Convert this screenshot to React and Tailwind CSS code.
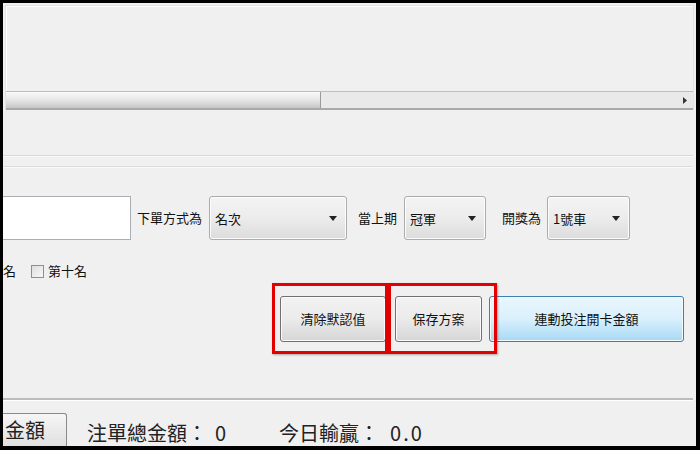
const cjk = { fontFamily: '"Noto Sans CJK TC", "Noto Sans CJK SC", sans-serif' };

const Select = ({ label, width }) => {
  return (
    <div
      className={`h-[44px] ${width} flex items-center justify-between pl-[5px] pr-[9px] border border-[#acacac] rounded-[3px] bg-gradient-to-b from-[#f4f4f4] via-[#ececec] to-[#dcdcdc] shadow-[inset_0_0_0_1px_#fcfcfc]`}
    >
      <span className="text-[13px] text-[#111] leading-none">{label}</span>
      <svg width="8" height="5" viewBox="0 0 8 5">
        <path d="M0 0h8L4 5z" fill="#222" />
      </svg>
    </div>
  );
};

const GrayButton = ({ children, width }) => {
  return (
    <div
      className={`h-[46px] ${width} flex items-center justify-center border border-[#707070] rounded-[3px] bg-gradient-to-b from-[#f2f2f2] via-[#ebebeb] to-[#d6d6d6] shadow-[inset_0_0_0_1px_#fbfbfb] text-[13px] text-[#111]`}
    >
      {children}
    </div>
  );
};

const App = () => {
  return (
    <div
      className="w-[700px] h-[450px] border-t-[3px] border-l-[3px] border-r-[4px] border-b-[4px] border-black bg-[#f0f0f0] overflow-hidden relative"
      style={cjk}
    >
      {/* top panel with scrollbar */}
      <div className="ml-[2px] mt-[2px] w-[689px] h-[105px] flex flex-col border-l border-t border-r border-[#e3e3e3] shadow-[inset_1px_1px_0_#ffffff]">
        <div className="flex-1" />
        <div className="h-[19px] flex border-t border-[#bdbdbd] border-b-2 border-b-[#a9a9a9] bg-[#e9e9e9]">
          <div className="w-[315px] h-full bg-gradient-to-b from-[#fafafa] via-[#e6e6e6] to-[#c6c6c6] border-r border-[#9a9a9a]" />
          <div className="flex-1" />
          <div className="w-[16px] flex items-center justify-center">
            <svg width="4" height="7" viewBox="0 0 4 7">
              <path d="M0 0l4 3.5L0 7z" fill="#333" />
            </svg>
          </div>
        </div>
      </div>

      {/* group box edges */}
      <div className="mt-[45px] h-[2px] w-[690px] border-t border-[#d8d8d8] bg-white/60" />
      <div className="mt-[9px] h-[2px] w-[690px] border-t border-[#dcdcdc] bg-white/60" />

      {/* settings row */}
      <div className="mt-[28px] h-[44px] flex items-center">
        <div className="w-[128px] h-[44px] bg-white border border-l-0 border-[#abadb3]" />
        <span className="ml-[6px] text-[13px] text-[#111]">下單方式為</span>
        <div className="ml-[7px]">
          <Select label="名次" width="w-[138px]" />
        </div>
        <span className="ml-[11px] text-[13px] text-[#111]">當上期</span>
        <div className="ml-[7px]">
          <Select label="冠軍" width="w-[82px]" />
        </div>
        <span className="ml-[16px] text-[13px] text-[#111]">開獎為</span>
        <div className="ml-[6px]">
          <Select label="1號車" width="w-[83px]" />
        </div>
      </div>

      {/* checkbox row */}
      <div className="mt-[19px] h-[24px] flex items-center text-[13px] text-[#111]">
        <span>名</span>
        <span className="ml-[15px] w-[13px] h-[13px] border border-[#8e8f8f] bg-gradient-to-br from-[#dedede] to-[#f8f8f8]" />
        <span className="ml-[4px]">第十名</span>
      </div>

      {/* action buttons */}
      <div className="mt-[13px] h-[46px] flex items-center">
        <div className="ml-[277px]">
          <GrayButton width="w-[106px]">清除默認值</GrayButton>
        </div>
        <div className="ml-[9px]">
          <GrayButton width="w-[87px]">保存方案</GrayButton>
        </div>
        <div className="ml-[7px] w-[195px] h-[46px] flex items-center justify-center border border-[#3c7fb1] rounded-[3px] bg-gradient-to-b from-[#eaf6fd] via-[#d9f0fc] to-[#a7d9f5] shadow-[inset_0_0_0_1px_#f4fbff] text-[13px] text-[#111]">
          連動投注開卡金額
        </div>
      </div>

      {/* bottom separator */}
      <div className="mt-[56px] h-[3px] w-[690px] border-t-2 border-[#bcbcbc] bg-white" />

      {/* totals row */}
      <div className="mt-[8px] h-[40px] flex items-end text-[20px] text-[#222]">
        <div className="w-[64px] h-[36px] flex items-center pl-[2px] pb-[3px] border border-l-0 border-b-0 border-[#8a8a8a] rounded-tr-[3px] bg-gradient-to-b from-[#f6f6f6] to-[#dedede]">
          金額
        </div>
        <span className="ml-[20px] mb-[6px] leading-none">注單總金額：</span>
        <span className="ml-[8px] mb-[6px] leading-none">0</span>
        <span className="ml-[53px] mb-[6px] leading-none">今日輸贏：</span>
        <span className="ml-[11px] mb-[6px] leading-none tracking-[2px]">0.0</span>
      </div>

      {/* red highlight boxes */}
      <div className="absolute left-[269px] top-[280px] w-[116px] h-[71px] border-[3px] border-[#e30000] shadow-[1px_1px_2px_rgba(0,0,0,0.3)]" />
      <div className="absolute left-[385px] top-[280px] w-[109px] h-[71px] border-[3px] border-[#e30000] shadow-[1px_1px_2px_rgba(0,0,0,0.3)]" />
    </div>
  );
};

export default App;
